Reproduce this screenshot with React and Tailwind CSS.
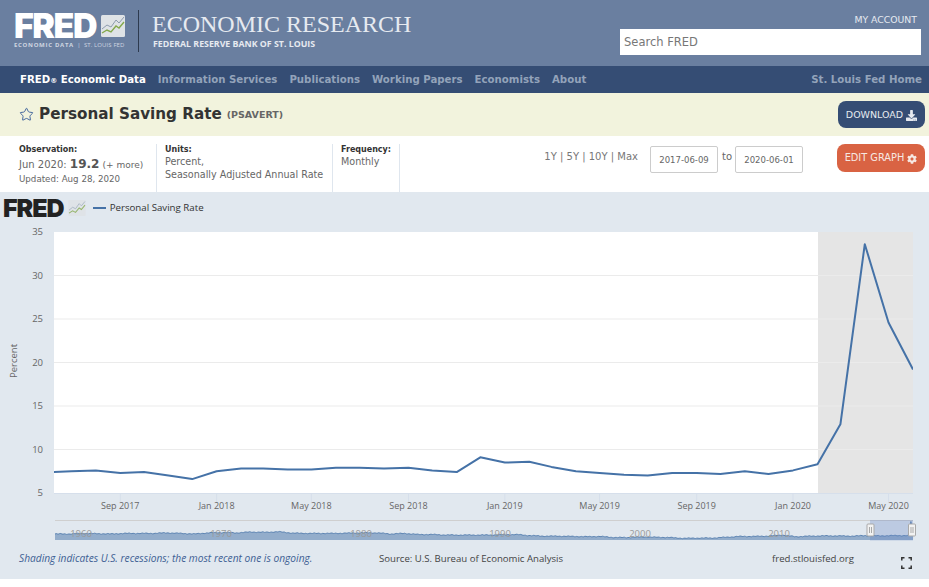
import { Star } from 'lucide-react';
import { FaDownload, FaCog } from 'react-icons/fa';

// monthly saving rate, Jun 2017 - Jun 2020
const series = [7.4, 7.5, 7.6, 7.3, 7.4, 7.0, 6.6, 7.5, 7.8, 7.8, 7.7, 7.7, 7.9, 7.9, 7.8, 7.9, 7.6, 7.4, 9.1, 8.5, 8.6, 8.0, 7.5, 7.3, 7.1, 7.0, 7.3, 7.3, 7.2, 7.5, 7.2, 7.6, 8.3, 12.9, 33.6, 24.6, 19.2];

const startMs = Date.UTC(2017, 5, 9);
const endMs = Date.UTC(2020, 5, 1);
const xOf = (ms) => 54 + ((ms - startMs) / (endMs - startMs)) * 859;
const yOf = (v) => 493 - (v - 5) * 8.7;

const linePath = series
  .map((v, i) => `${i === 0 ? 'M' : 'L'}${xOf(Date.UTC(2017, 5 + i, 1)).toFixed(1)} ${yOf(v).toFixed(1)}`)
  .join(' ');

const xTicks = [
  ['Sep 2017', 2017, 8], ['Jan 2018', 2018, 0], ['May 2018', 2018, 4], ['Sep 2018', 2018, 8],
  ['Jan 2019', 2019, 0], ['May 2019', 2019, 4], ['Sep 2019', 2019, 8], ['Jan 2020', 2020, 0], ['May 2020', 2020, 4],
];

// yearly anchors for the navigator strip, 1959 - 2020
const yearly = [11, 11, 12, 11.5, 11, 12, 12, 12, 13, 12, 11, 13, 13.5, 13, 14.5, 14, 15, 12.5, 12, 12, 12, 12.5, 13, 13, 11, 12, 10, 10, 9, 9, 9, 9, 9.5, 10, 8, 7, 7, 6.5, 6, 6.5, 4.5, 4.5, 5.5, 5, 4.5, 3, 3.5, 3.5, 5, 6.5, 6.5, 7, 9, 6, 7, 7.5, 7.5, 7, 8, 7.5, 8];
const miniX = (t) => 55 + ((t - 1959) / 61.4) * 858;
const miniY = (v) => 540 - v * 0.55;
const miniPoints = [];
for (let m = 0; m < 735; m++) {
  const t = m / 12;
  const a = yearly[Math.min(Math.floor(t), 60)];
  const b = yearly[Math.min(Math.floor(t) + 1, 60)];
  const wobble = Math.sin(m * 1.7) * 0.5 + Math.sin(m * 0.43) * 0.4;
  miniPoints.push([miniX(1959 + t), miniY(a + (b - a) * (t - Math.floor(t)) + wobble)]);
}
// the 2020 spike
[[2020.1, 13], [2020.25, 33.6], [2020.33, 24.6], [2020.42, 19.2]].forEach(([t, v]) => miniPoints.push([miniX(t), miniY(v)]));
const miniLine = miniPoints.map((p, i) => `${i === 0 ? 'M' : 'L'}${p[0].toFixed(1)} ${p[1].toFixed(1)}`).join(' ');
const miniArea = `${miniLine} L913 540 L55 540 Z`;

const TrendBox = ({ className }) => (
  <svg viewBox="0 0 24 22" className={className}>
    <rect width="24" height="22" rx="1.5" fill="#dfe3e6" />
    <path d="M1 14 L6 10 L10 12 L15 5 L18 8 L23 2" fill="none" stroke="#8d9cae" strokeWidth="1" />
    <path d="M1 18 L6 15 L10 17 L15 11 L18 13 L23 7" fill="none" stroke="#84a94c" strokeWidth="1.4" />
  </svg>
);

const Handle = ({ x }) => (
  <g>
    <rect x={x - 3.5} y="524" width="7" height="12" rx="1" fill="#f2f2f2" stroke="#a9a9a9" />
    <path d={`M${x - 1} 527 V533 M${x + 1} 527 V533`} stroke="#a9a9a9" strokeWidth="1" />
  </g>
);

const Chart = () => (
  <svg width="929" height="330" viewBox="0 222 929 330" className="block [font-family:'Open_Sans',sans-serif]">
    <rect x="54" y="232" width="859" height="261" fill="#ffffff" />
    <rect x="818" y="232" width="95" height="261" fill="#e5e5e5" />
    {[275.5, 319, 362.5, 406, 449.5].map((y) => (
      <line key={y} x1="54" x2="913" y1={y} y2={y} stroke="#ebebeb" />
    ))}
    {[35, 30, 25, 20, 15, 10, 5].map((v) => (
      <text key={v} x="43" y={yOf(v) + 3} textAnchor="end" fontSize="9.5" fill="#666666">{v}</text>
    ))}
    <text x="0" y="0" transform="translate(17 361) rotate(-90)" textAnchor="middle" fontSize="9.5" fill="#666666">Percent</text>
    <line x1="54" x2="913" y1="493.5" y2="493.5" stroke="#d6dfeb" />
    {xTicks.map(([label, yr, mo]) => {
      const x = xOf(Date.UTC(yr, mo, 1));
      return (
        <g key={label}>
          <line x1={x} x2={x} y1="493" y2="503" stroke="#d6dfeb" />
          <text x={x} y="509" textAnchor="middle" fontSize="9" fill="#666666">{label}</text>
        </g>
      );
    })}
    <path d={linePath} fill="none" stroke="#4572a7" strokeWidth="2" strokeLinejoin="round" clipPath="url(#plot)" />
    <clipPath id="plot">
      <rect x="54" y="232" width="859" height="261" />
    </clipPath>

    <line x1="55" x2="913" y1="520.5" y2="520.5" stroke="#cfcfcf" />
    <path d={miniArea} fill="#4572a7" fillOpacity="0.5" />
    <path d={miniLine} fill="none" stroke="#4572a7" strokeWidth="0.8" />
    {[['1960', 81], ['1970', 221], ['1980', 361], ['1990', 500], ['2000', 640], ['2010', 779]].map(([label, x]) => (
      <text key={label} x={x} y="537" textAnchor="middle" fontSize="9.5" fill="#999999">{label}</text>
    ))}
    <rect x="870" y="520" width="43" height="20.5" fill="#6685c2" fillOpacity="0.3" />
    <Handle x={870.5} />
    <Handle x={912} />
  </svg>
);

const Divider = () => <div className="w-px bg-[#dfe6ee] self-stretch" />;

const App = () => {
  return (
    <div className="w-[929px] h-[587px] bg-white overflow-hidden [font-family:'DejaVu_Sans',sans-serif]">
      {/* top banner */}
      <header className="h-[66px] bg-[#6a7fa0] flex items-start">
        <div className="w-[138px] pl-[14px] pt-[13px]">
          <div className="flex items-center h-[26px]">
            <span className="[font-family:'Inter',sans-serif] font-black text-[34px] leading-[26px] tracking-[-1.5px] text-white">FRED</span>
            <TrendBox className="w-[24px] h-[22px] ml-[5px]" />
          </div>
          <div className="[font-family:'Open_Sans',sans-serif] text-[6px] leading-[8px] mt-[2px] text-[#cfd6e0] whitespace-nowrap tracking-[0.1px]">
            <span className="font-bold tracking-[0.7px]">ECONOMIC DATA</span> &nbsp;|&nbsp; ST. LOUIS FED
          </div>
        </div>
        <div className="w-px h-[42px] mt-[10px] bg-[#2d3a4f]" />
        <div className="pl-[13px] pt-[10px]">
          <div className="[font-family:'Liberation_Serif',serif] text-[24px] leading-[28px] text-[#e6eaf0] whitespace-nowrap">ECONOMIC RESEARCH</div>
          <div className="[font-family:'Open_Sans',sans-serif] font-bold text-[8.8px] leading-[12px] pl-px text-[#e6eaf0] whitespace-nowrap">FEDERAL RESERVE BANK OF ST. LOUIS</div>
        </div>
        <div className="ml-auto w-[301px] mr-[8px] pt-[14px]">
          <div className="text-[9.3px] leading-[12px] text-right pr-[4px] text-[#e6eaf0]">MY ACCOUNT</div>
          <div className="h-[26px] mt-[3px] bg-white pl-[4px] text-[11.5px] leading-[26px] text-[#777777]">Search FRED</div>
        </div>
      </header>

      {/* nav */}
      <nav className="h-[27px] bg-[#354d74] flex items-center pl-[20px] pr-[7px] text-[10.2px] font-bold text-[#93a3ba] whitespace-nowrap">
        <span className="text-white">FRED<span className="text-[7px]">®</span> Economic Data</span>
        <span className="ml-[12px]">Information Services</span>
        <span className="ml-[12px]">Publications</span>
        <span className="ml-[12px]">Working Papers</span>
        <span className="ml-[12px]">Economists</span>
        <span className="ml-[12px]">About</span>
        <span className="ml-auto">St. Louis Fed Home</span>
      </nav>

      {/* title band */}
      <div className="h-[43px] bg-[#f2f3dd] flex items-center pl-[19px] pr-[4px]">
        <Star className="w-[15px] h-[15px] text-[#3a5f9a]" strokeWidth={1.5} />
        <h1 className="ml-[5px] text-[15.2px] font-bold text-[#333333]">Personal Saving Rate</h1>
        <span className="ml-[5px] mt-[2px] text-[9.5px] font-bold text-[#666666]">(PSAVERT)</span>
        <button className="ml-auto w-[87px] h-[27px] pt-[1px] rounded-[8px] bg-[#354d74] text-[#e6eaf0] text-[9.5px] flex items-center justify-center gap-[3px]">
          DOWNLOAD <FaDownload className="w-[11px] h-[11px]" />
        </button>
      </div>

      {/* meta row */}
      <div className="h-[56px] flex pl-[19px] pr-[4px]">
        <div className="w-[137px] pt-[8px] text-[#666666]">
          <div className="text-[8px] leading-[11px] font-bold text-[#333333]">Observation:</div>
          <div className="text-[10px] leading-[17px] mt-[1px] whitespace-nowrap">
            Jun 2020: <b className="text-[12px] text-[#555555]">19.2</b> <span className="text-[9px]">(+ more)</span>
          </div>
          <div className="text-[8.7px] leading-[11px]">Updated: Aug 28, 2020</div>
        </div>
        <div className="flex mt-[8px]"><Divider /></div>
        <div className="w-[175px] pl-[8px] pt-[8px] text-[#666666]">
          <div className="text-[8px] leading-[11px] font-bold text-[#333333]">Units:</div>
          <div className="text-[9.6px] leading-[13px] whitespace-nowrap">Percent,<br />Seasonally Adjusted Annual Rate</div>
        </div>
        <div className="flex mt-[8px]"><Divider /></div>
        <div className="w-[66px] pl-[8px] pt-[8px] text-[#666666]">
          <div className="text-[8px] leading-[11px] font-bold text-[#333333]">Frequency:</div>
          <div className="text-[9.6px] leading-[13px]">Monthly</div>
        </div>
        <div className="flex mt-[8px]"><Divider /></div>
        <div className="ml-auto flex items-start text-[#777777]">
          <div className="text-[10px] leading-[12px] mt-[15px] whitespace-nowrap">1Y | 5Y | 10Y | Max</div>
          <div className="ml-[12px] mt-[10px] w-[68px] h-[27px] pt-[1px] border border-[#cccccc] rounded-[2px] text-center text-[8.5px] leading-[25px] text-[#666666]">2017-06-09</div>
          <div className="w-[17px] pl-[4px] mt-[14px] text-[10px] leading-[13px] text-[#666666]">to</div>
          <div className="mt-[10px] w-[68px] h-[27px] pt-[1px] border border-[#cccccc] rounded-[2px] text-center text-[8.5px] leading-[25px] text-[#666666]">2020-06-01</div>
          <button className="ml-[34px] mt-[8px] w-[88px] h-[28px] pt-[1px] rounded-[8px] bg-[#d96343] text-[#f6e8e2] text-[9.8px] flex items-center justify-center gap-[3px]">
            EDIT GRAPH <FaCog className="w-[10px] h-[10px]" />
          </button>
        </div>
      </div>

      {/* graph panel */}
      <section className="h-[387px] bg-[#e1e8ef]">
        <div className="h-[30px] flex items-center pl-[3px] pt-[2px]">
          <span className="[font-family:'Inter',sans-serif] font-black text-[25px] leading-none tracking-[-1px] text-[#222222]">FRED</span>
          <TrendBox className="w-[18px] h-[16px] ml-[4px] opacity-80" />
          <div className="w-[13px] h-[2px] ml-[7px] bg-[#4572a7]" />
          <span className="ml-[4px] [font-family:'Open_Sans',sans-serif] text-[9.7px] text-[#333333]">Personal Saving Rate</span>
        </div>
        <Chart />
        <div className="relative h-[27px] [font-family:'Open_Sans',sans-serif] text-[9.6px] leading-[13px] flex pl-[19px] text-[#444444]">
          <span className="w-[360px] italic text-[10.2px] text-[#3e5f94]">Shading indicates U.S. recessions; the most recent one is ongoing.</span>
          <span className="w-[393px]">Source: U.S. Bureau of Economic Analysis</span>
          <span>fred.stlouisfed.org</span>
          <svg viewBox="0 0 11 12" className="absolute left-[901px] top-[5px] w-[11px] h-[12px]" fill="none" stroke="#333333" strokeWidth="1.5">
            <path d="M0.8 3.5V0.8H3.5 M7.5 0.8H10.2V3.5 M0.8 8.5V11.2H3.5 M7.5 11.2H10.2V8.5" />
          </svg>
        </div>
      </section>
    </div>
  );
};

export default App;
